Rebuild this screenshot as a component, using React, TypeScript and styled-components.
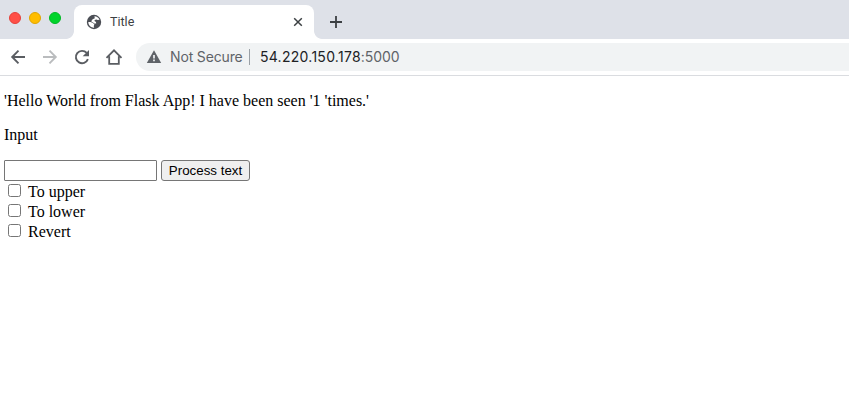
import React from "react";
import styled, { createGlobalStyle } from "styled-components";

const GlobalStyle = createGlobalStyle`
  html, body { margin: 0; background: #fff; }
  body { height: 403px; overflow: hidden; }
`;

const Window = styled.div`
  height: 403px;
  background: #fff;
`;

const TabStrip = styled.div`
  height: 39px;
  display: flex;
  align-items: flex-end;
  background: #dee1e8;
`;

const WindowControls = styled.div`
  align-self: flex-start;
  display: flex;
  gap: 8px;
  padding: 12px 0 0 9px;
  width: 74px;
  box-sizing: border-box;
`;

const ControlDot = styled.span<{ $fill: string; $edge: string }>`
  flex: none;
  box-sizing: border-box;
  width: 12px;
  height: 12px;
  border-radius: 50%;
  background: ${(p) => p.$fill};
  border: 1px solid ${(p) => p.$edge};
`;

const Tab = styled.div`
  position: relative;
  box-sizing: border-box;
  width: 240px;
  height: 34px;
  padding: 0 10px 0 12px;
  display: flex;
  align-items: center;
  background: #fff;
  border-radius: 8px 8px 0 0;

  &::before,
  &::after {
    content: "";
    position: absolute;
    bottom: 0;
    width: 8px;
    height: 8px;
  }
  &::before {
    left: -8px;
    background: radial-gradient(circle at 0 0, transparent 7.5px, #fff 8.2px);
  }
  &::after {
    right: -8px;
    background: radial-gradient(circle at 100% 0, transparent 7.5px, #fff 8.2px);
  }
`;

const TabTitle = styled.span`
  flex: 1;
  margin-left: 8px;
  font: 12.5px/16px Roboto, "Liberation Sans", sans-serif;
  color: #3c4043;
`;

const Icon = styled.svg`
  display: block;
  flex: none;
`;

const NewTab = styled.div`
  height: 34px;
  margin-left: 14px;
  display: flex;
  align-items: center;
`;

const Toolbar = styled.div`
  box-sizing: border-box;
  height: 37px;
  padding-left: 8px;
  display: flex;
  align-items: center;
  border-bottom: 1px solid #dadce0;
`;

const NavButtons = styled.div`
  display: flex;
  gap: 12px;
  width: 128px;
`;

const AddressBar = styled.div`
  flex: 1;
  height: 28px;
  display: flex;
  align-items: center;
  padding-left: 10px;
  background: #f1f3f4;
  border-radius: 14px 0 0 14px;
  font: 14px/20px Inter, "Liberation Sans", sans-serif;
  color: #202124;
  white-space: pre;
`;

const Security = styled.span`
  width: 72px;
  margin-left: 8px;
  color: #5f6368;
  letter-spacing: -0.15px;
`;

const Divider = styled.span`
  width: 1px;
  height: 16px;
  margin: 0 10px 0 7px;
  background: #9aa0a6;
`;

const Host = styled.span`
  letter-spacing: 0.27px;
`;

const Port = styled.span`
  letter-spacing: -0.1px;
  color: #5f6368;
`;

const Page = styled.main`
  padding: 0 4px;
  font: 16px/18px "Liberation Serif", "Times New Roman", serif;
  color: #000;
`;

const Paragraph = styled.p`
  margin: 16px 0;
`;

const InputRow = styled.div`
  display: flex;
  gap: 4px;
  height: 21px;
  margin-bottom: 1px;
`;

const TextInput = styled.input`
  box-sizing: border-box;
  width: 153px;
  height: 21px;
  margin: 0;
  padding: 1px 2px;
  border: 1px solid #767676;
  border-radius: 1px;
  background: #fff;
  font: 13.333px "Liberation Sans", sans-serif;
`;

const SubmitButton = styled.button`
  box-sizing: border-box;
  width: 89px;
  height: 21px;
  margin: 0;
  padding: 0;
  border: 1px solid #767676;
  border-radius: 3px;
  background: #efefef;
  color: #000;
  white-space: nowrap;
  font: 13.333px/19px "Liberation Sans", sans-serif;
`;

const Option = styled.label`
  display: flex;
  align-items: flex-start;
  gap: 7px;
  height: 20px;
  padding-left: 4px;
  line-height: 20px;
`;

const Checkbox = styled.input`
  appearance: none;
  box-sizing: border-box;
  width: 13px;
  height: 13px;
  margin: 2px 0 0;
  border: 1px solid #767676;
  border-radius: 2.5px;
  background: #fff;
`;

const OPTIONS = ["To upper", "To lower", "Revert"];

export default function App() {
  return (
    <Window>
      <GlobalStyle />
      <TabStrip>
        <WindowControls>
          <ControlDot $fill="#ff4f47" $edge="#e5403a" />
          <ControlDot $fill="#ffbd00" $edge="#e0a500" />
          <ControlDot $fill="#00d42b" $edge="#00b823" />
        </WindowControls>
        <Tab>
          <Icon width="16" height="16" viewBox="0 0 16 16">
            <circle cx="8" cy="8" r="7.2" fill="#4b4e55" />
            <path
              fill="#fff"
              d="M8.400 2.300C10.700 2.400 12.700 3.800 13.500 5.800L11.800 6.100 10.300 5.400 8.700 5.900 8.500 7.100 10 7.900 10.200 9.400 8.300 9.500 6.800 8.200 5.500 7.900 5.800 6.100 7.200 5.100 8.800 4.200Z"
            />
            <path
              fill="#fff"
              d="M2.300 8H4.500L7 9.100 8.400 10.500 7.700 12.100 8.200 13.700C5 13.800 2.300 11.400 2.300 8Z"
            />
          </Icon>
          <TabTitle>Title</TabTitle>
          <Icon width="12" height="12" viewBox="0 0 12 12">
            <path d="M2.200 2.200l7.600 7.600M9.800 2.200L2.200 9.800" stroke="#3c4043" strokeWidth="1.5" />
          </Icon>
        </Tab>
        <NewTab>
          <Icon width="16" height="16" viewBox="0 0 16 16">
            <path d="M8 2v12M2 8h12" stroke="#3c4043" strokeWidth="1.8" />
          </Icon>
        </NewTab>
      </TabStrip>
      <Toolbar>
        <NavButtons>
          <Icon width="20" height="20" viewBox="0 0 20 20">
            <path d="M17 10H4.500M10.500 3.700L4.200 10l6.300 6.300" fill="none" stroke="#5a5d62" strokeWidth="1.900" />
          </Icon>
          <Icon width="20" height="20" viewBox="0 0 20 20">
            <path d="M3 10h12.500M9.500 3.700l6.300 6.300-6.300 6.300" fill="none" stroke="#babcbe" strokeWidth="1.900" />
          </Icon>
          <Icon width="20" height="20" viewBox="0 0 20 20">
            <path d="M15.900 12.200A6.200 6.200 0 1 1 14.700 5.900" fill="none" stroke="#5a5d62" strokeWidth="1.900" />
            <path d="M17 3v6.300h-6.300z" fill="#5a5d62" />
          </Icon>
          <Icon width="20" height="20" viewBox="0 0 20 20">
            <path d="M2.500 10.900L10 3.300l7.500 7.600M5.200 9.300v7.600h9.600V9.300" fill="none" stroke="#5a5d62" strokeWidth="1.800" />
          </Icon>
        </NavButtons>
        <AddressBar>
          <Icon width="16" height="16" viewBox="0 0 16 16">
            <path d="M8 1.300L15.200 14H.8z" fill="#5f6368" />
            <path d="M8 6v3.500M8 10.500v1.700" stroke="#f1f3f4" strokeWidth="1.700" />
          </Icon>
          <Security>Not Secure</Security>
          <Divider />
          <Host>54.220.150.178</Host>
          <Port>:5000</Port>
        </AddressBar>
      </Toolbar>
      <Page>
        <Paragraph>'Hello World from Flask App! I have been seen '1 'times.'</Paragraph>
        <Paragraph>Input</Paragraph>
        <InputRow>
          <TextInput type="text" aria-label="Input" />
          <SubmitButton type="button">Process text</SubmitButton>
        </InputRow>
        {OPTIONS.map((label) => (
          <Option key={label}>
            <Checkbox type="checkbox" />
            {label}
          </Option>
        ))}
      </Page>
    </Window>
  );
}
